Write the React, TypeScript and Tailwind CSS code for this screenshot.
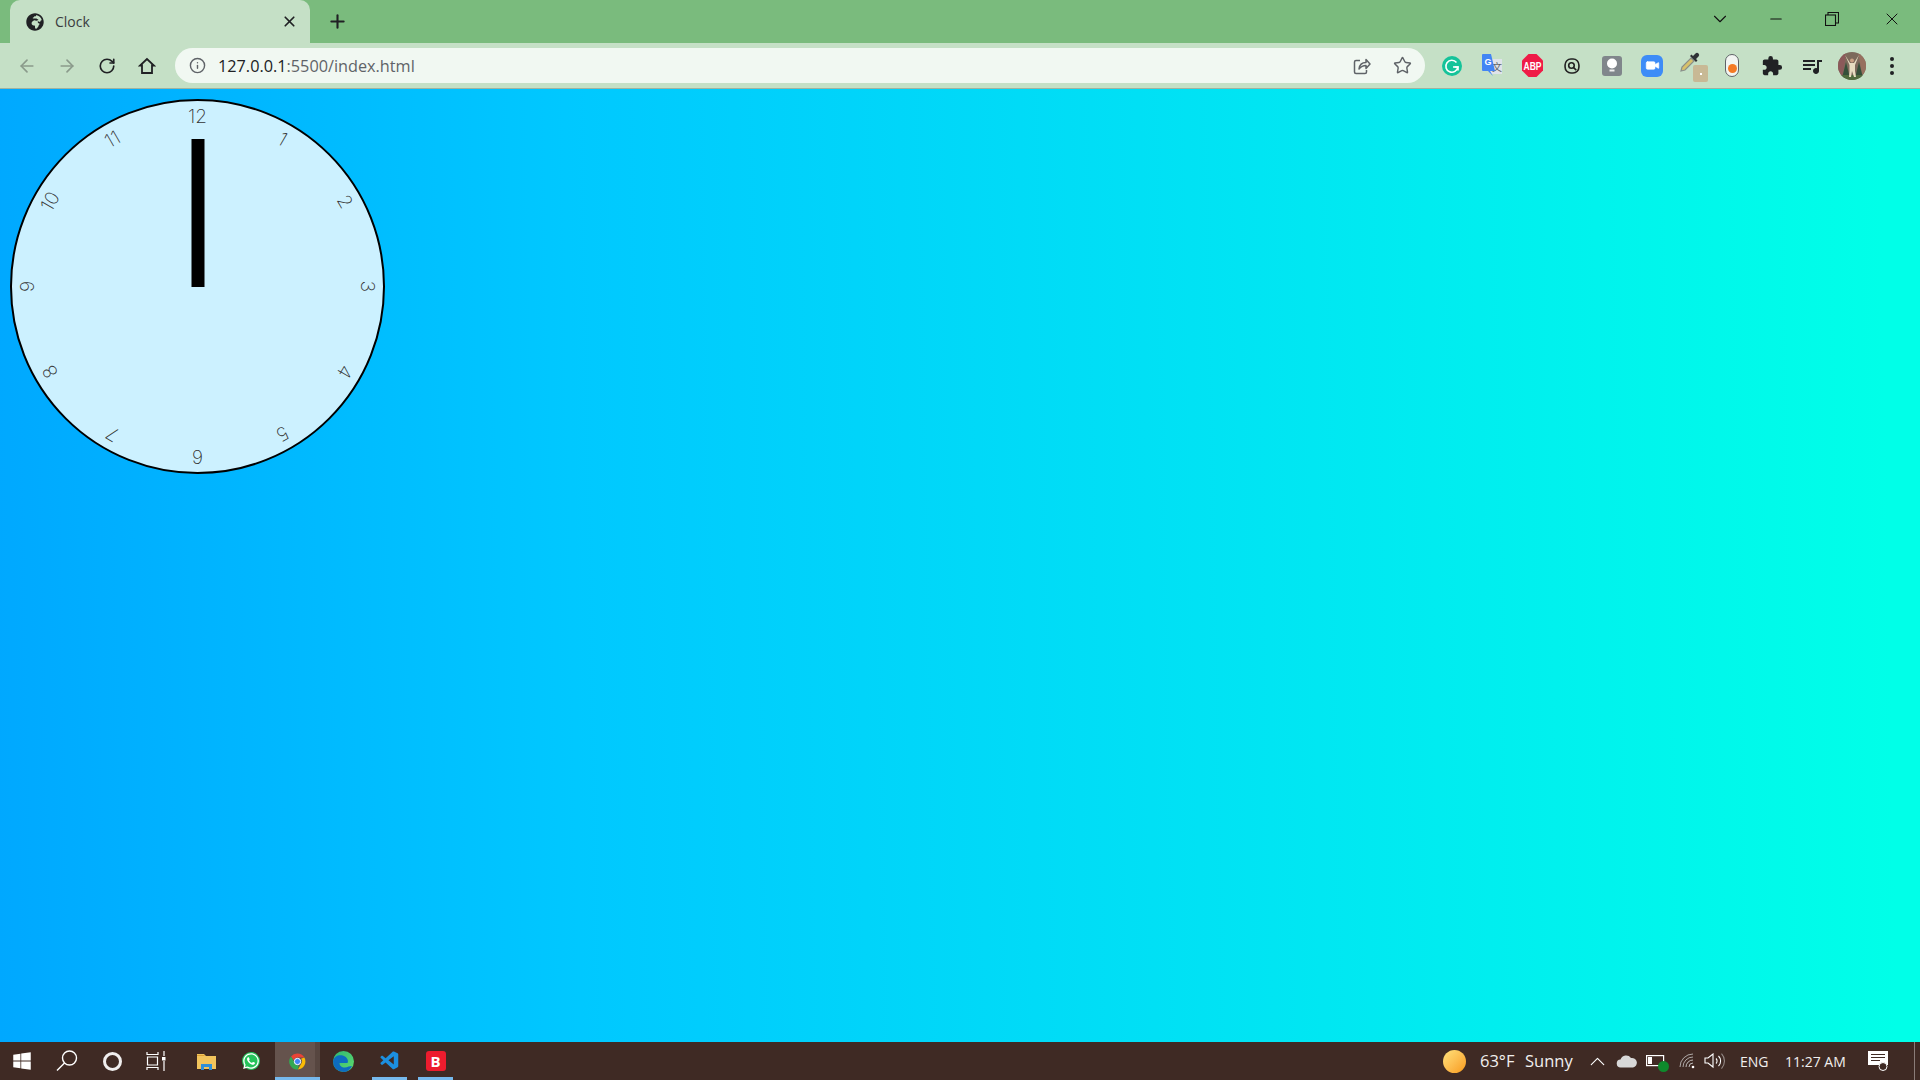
import React from 'react'
import { ArrowLeft, ArrowRight, RotateCw, Star, X, Plus, Minus, ChevronDown, ChevronUp, Info, Video } from 'lucide-react'
import { FaGlobeAfrica, FaWindows, FaWhatsapp } from 'react-icons/fa'
import { MdExtension, MdQueueMusic } from 'react-icons/md'
import { VscVscode } from 'react-icons/vsc'

const NUMBERS = [
  { n: 12, cls: 'rotate-0' },
  { n: 1, cls: 'rotate-[30deg]' },
  { n: 2, cls: 'rotate-[60deg]' },
  { n: 3, cls: 'rotate-[90deg]' },
  { n: 4, cls: 'rotate-[120deg]' },
  { n: 5, cls: 'rotate-[150deg]' },
  { n: 6, cls: 'rotate-[180deg]' },
  { n: 7, cls: 'rotate-[210deg]' },
  { n: 8, cls: 'rotate-[240deg]' },
  { n: 9, cls: 'rotate-[270deg]' },
  { n: 10, cls: 'rotate-[300deg]' },
  { n: 11, cls: 'rotate-[330deg]' },
]

function ToolSlot({ children }: { children: React.ReactNode }) {
  return <div className="w-10 h-full flex items-center justify-center shrink-0">{children}</div>
}

function TabStrip() {
  return (
    <div className="h-[43px] bg-[#7abb7d] flex items-stretch shrink-0">
      <div className="ml-[10px] w-[300px] bg-[#c5e0c6] rounded-t-[10px] flex items-center pl-[16px] pr-[12px]">
        <FaGlobeAfrica className="text-[#202124] text-[18px] shrink-0" />
        <span className="ml-[11px] text-[14px] text-[#3a3c40] flex-1">Clock</span>
        <X size={17} strokeWidth={2.4} className="text-[#202124]" />
      </div>
      <div className="w-[55px] flex items-center justify-center">
        <Plus size={21} strokeWidth={2.4} className="text-[#202124]" />
      </div>
      <div className="flex-1" />
      <div className="flex items-center h-[38px] text-[#111]">
        <ChevronDown size={22} strokeWidth={1.2} className="mr-[36px]" />
        <Minus size={18} strokeWidth={1.4} className="mr-[40px]" />
        <svg width="14" height="14" viewBox="0 0 14 14" fill="none" stroke="currentColor" strokeWidth="1.100" className="mr-[43px]">
          <rect x="0.5" y="3" width="10" height="10.5" />
          <path d="M3 3V.5h10.5V11H10.500" />
        </svg>
        <X size={20} strokeWidth={1.2} className="mr-[18px]" />
      </div>
    </div>
  )
}

function HomeIcon() {
  return (
    <svg width="18" height="18" viewBox="0 0 18 18" fill="none" stroke="#202124" strokeWidth="1.800" strokeLinejoin="miter">
      <path d="M9 2 2 8.500h2V16h10V8.500h2z" />
    </svg>
  )
}

function ShareIcon() {
  return (
    <svg width="18" height="18" viewBox="0 0 18 18" fill="none" stroke="#5f6368" strokeWidth="1.500">
      <path d="M7 3.500H3a1.500 1.500 0 0 0-1.500 1.500v10A1.500 1.500 0 0 0 3 16.500h9a1.500 1.500 0 0 0 1.500-1.500v-2" />
      <path d="M6 12c.5-4 3-6.500 7-6.500V2.500l4 4.500-4 4.500V8.500c-3 0-5 1-7 3.500z" strokeLinejoin="round" />
    </svg>
  )
}

function Grammarly() {
  return (
    <svg width="20" height="20" viewBox="0 0 20 20">
      <circle cx="10" cy="10" r="10" fill="#15c39a" />
      <path d="M14.500 6.500A6 6 0 1 0 15.800 11H11" fill="none" stroke="#fff" strokeWidth="1.600" />
      <path d="M12.500 11h3.500v3.500" fill="none" stroke="#fff" strokeWidth="1.600" />
    </svg>
  )
}

function TranslateIcon() {
  return (
    <svg width="20" height="24" viewBox="0 0 20 24">
      <rect x="8" y="5" width="12" height="15" fill="#dfe3ea" />
      <text x="10" y="17" fontSize="10" fill="#5f6368" fontFamily="Noto Sans CJK SC, sans-serif">文</text>
      <path d="M0 1a1 1 0 0 1 1-1h8l4 17H8l3 5-5-5H1a1 1 0 0 1-1-1z" fill="#4285f4" />
      <text x="2.500" y="11" fontSize="9" fontWeight="700" fill="#fff" fontFamily="Liberation Sans, sans-serif">G</text>
    </svg>
  )
}

function AbpIcon() {
  return (
    <svg width="21" height="23" viewBox="0 0 21 23">
      <path d="M6.500 0h8L21 6.500v10L14.500 23h-8L0 16.500v-10z" fill="#ef1b47" />
      <text x="10.500" y="15.500" textAnchor="middle" fontSize="10.500" fontWeight="700" fill="#fff" textLength="18" lengthAdjust="spacingAndGlyphs" fontFamily="Liberation Sans, sans-serif">ABP</text>
    </svg>
  )
}

function LensIcon() {
  return (
    <svg width="16" height="16" viewBox="0 0 15 15" fill="none" stroke="#222" strokeWidth="1.500">
      <rect x="1" y="1" width="13" height="13" rx="5.500" />
      <circle cx="7" cy="7" r="2.600" />
      <path d="m9 9 2.500 2.300" />
    </svg>
  )
}

function BulbIcon() {
  return (
    <div className="w-5 h-5 rounded-[3px] bg-[#80868b] flex items-center justify-center">
      <svg width="12" height="15" viewBox="0 0 12 15" fill="#fff">
        <circle cx="6" cy="5.500" r="5" />
        <rect x="3.500" y="11.500" width="5" height="2" fill="#eee" />
      </svg>
    </div>
  )
}

function ZoomIcon() {
  return (
    <div className="w-[22px] h-[22px] rounded-[6px] bg-[#3d8cf7] flex items-center justify-center">
      <Video size={15} fill="#fff" strokeWidth={1} className="text-white" />
    </div>
  )
}

function DropperIcon() {
  return (
    <div className="relative w-[28px] h-[30px] -mt-[1px]">
      <svg width="24" height="24" viewBox="0 0 24 24" className="absolute left-0 top-0">
        <path d="m3 21 1-4 9-9 3 3-9 9z" fill="#d8c26a" stroke="#8a8f8a" strokeWidth="1.200" />
        <path d="m12 6 6 6 1.500-1.500-1.500-1.500 2.500-2.500a2 2 0 0 0-3-3L15 6l-1.500-1.500z" fill="#2f3235" />
      </svg>
      <div className="absolute right-[-2px] bottom-[-2px] w-[15px] h-[17px] rounded-[2px] bg-[#c8b995] flex items-center justify-center">
        <span className="w-[2px] h-[2px] bg-white" />
      </div>
    </div>
  )
}

function PillIcon() {
  return (
    <div className="w-[14px] h-[23px] rounded-[7px] border-[1.5px] border-[#5f6368] bg-[#f2f5f2] flex items-end justify-center pb-[3px]">
      <span className="w-[9px] h-[9px] rounded-full bg-[#f47a25]" />
    </div>
  )
}

function Avatar() {
  return (
    <svg width="28" height="28" viewBox="0 0 28 28">
      <defs>
        <clipPath id="avatar-clip"><circle cx="14" cy="14" r="14" /></clipPath>
      </defs>
      <g clipPath="url(#avatar-clip)">
        <rect width="28" height="28" fill="#7d6a5c" />
        <path d="M0 4 8 0l-3 24H0z" fill="#8b5a5a" />
        <path d="M20 0h8v22h-4z" fill="#97705f" />
        <path d="M8 10 4 26h8zM21 10l-4 16h8z" fill="#35503a" />
        <path d="M0 23h28v5H0z" fill="#4f6b3d" />
        <path d="m7 3 5 8h4l5-8-4 10v6l1 6h-2l-2-6-1 6h-2l.5-6v-6z" fill="#e6dcc0" />
        <circle cx="14" cy="8.500" r="2" fill="#c9a184" />
      </g>
    </svg>
  )
}

function Toolbar() {
  return (
    <div className="h-[46px] bg-[#c5e0c6] border-b border-b-[#9fb3a0] flex items-center pl-[7px] shrink-0">
      <ToolSlot><ArrowLeft size={20} strokeWidth={2} className="text-[#8a9a8b]" /></ToolSlot>
      <ToolSlot><ArrowRight size={20} strokeWidth={2} className="text-[#8a9a8b]" /></ToolSlot>
      <ToolSlot><RotateCw size={18} strokeWidth={2.2} className="text-[#202124]" /></ToolSlot>
      <ToolSlot><HomeIcon /></ToolSlot>
      <div className="ml-2 w-[1250px] h-[35px] rounded-full bg-[#f1f8f2] flex items-center pl-[14px] pr-[3px] shrink-0">
        <Info size={17} strokeWidth={2} className="text-[#5f6368]" />
        <span className="ml-[12px] text-[16.25px] leading-[24px] text-[#5f6368] flex-1">
          <span className="text-[#202124]">127.0.0.1</span>:5500/index.html
        </span>
        <div className="w-[40px] flex justify-center"><ShareIcon /></div>
        <div className="w-[40px] flex justify-center"><Star size={19} strokeWidth={1.8} className="text-[#5f6368]" /></div>
      </div>
      <div className="ml-[7px] flex items-center h-full">
        <ToolSlot><Grammarly /></ToolSlot>
        <ToolSlot><TranslateIcon /></ToolSlot>
        <ToolSlot><AbpIcon /></ToolSlot>
        <ToolSlot><LensIcon /></ToolSlot>
        <ToolSlot><BulbIcon /></ToolSlot>
        <ToolSlot><ZoomIcon /></ToolSlot>
        <ToolSlot><DropperIcon /></ToolSlot>
        <ToolSlot><PillIcon /></ToolSlot>
        <ToolSlot><MdExtension className="text-[#202124] text-[22px]" /></ToolSlot>
        <ToolSlot><MdQueueMusic className="text-[#202124] text-[24px]" /></ToolSlot>
        <ToolSlot><Avatar /></ToolSlot>
        <ToolSlot>
          <div className="flex flex-col gap-[3px]">
            <span className="w-[4px] h-[4px] rounded-full bg-[#202124]" />
            <span className="w-[4px] h-[4px] rounded-full bg-[#202124]" />
            <span className="w-[4px] h-[4px] rounded-full bg-[#202124]" />
          </div>
        </ToolSlot>
      </div>
    </div>
  )
}

function Clock() {
  return (
    <div className="relative ml-[10px] mt-[10px] w-[375px] h-[375px] rounded-full border-2 border-black bg-[#ccf1ff]">
      {NUMBERS.map(({ n, cls }) => (
        <div
          key={n}
          className={`absolute inset-0 text-center pt-[4px] text-[19px] leading-[24px] font-extralight text-[#333] font-['Inter',sans-serif] ${cls}`}
        >
          {n}
        </div>
      ))}
      <div className="absolute left-1/2 -translate-x-1/2 top-[38px] w-[13px] h-[148px] bg-black" />
    </div>
  )
}

function TaskSlot({ className, children }: { className: string; children: React.ReactNode }) {
  return <div className={`relative h-full flex items-center justify-center shrink-0 ${className}`}>{children}</div>
}

function ChromeLogo() {
  return (
    <svg width="19" height="19" viewBox="0 0 48 48">
      <path d="M24 4a20 20 0 0 1 17.300 10H24a10 10 0 0 0-9.500 6.900L7.600 11.500A20 20 0 0 1 24 4z" fill="#ea4335" />
      <path d="M41.300 14A20 20 0 0 1 25 44l8.700-15A10 10 0 0 0 33 17z" fill="#fbbc05" />
      <path d="M25 44A20 20 0 0 1 7.600 11.500l8.700 15A10 10 0 0 0 27 33.500z" fill="#34a853" />
      <circle cx="24" cy="24" r="8" fill="#4285f4" stroke="#fff" strokeWidth="2.500" />
    </svg>
  )
}

function EdgeLogo() {
  return (
    <svg width="21" height="21" viewBox="0 0 21 21">
      <defs>
        <linearGradient id="edge-top" x1="0" y1="0" x2="1" y2="1">
          <stop offset="0" stopColor="#2fb673" />
          <stop offset="1" stopColor="#5fdc6e" />
        </linearGradient>
      </defs>
      <circle cx="10.500" cy="10.500" r="10.500" fill="url(#edge-top)" />
      <path d="M0 10.500C1 4 8 3 12 5.500c3 2 3.500 5 2.500 6.500H6.500c0 4 5 6 9 3.500l3.500-.5c-2 4-5 6-8.500 6A10.500 10.500 0 0 1 0 10.500z" fill="#0d6cc0" />
    </svg>
  )
}

function Taskbar() {
  return (
    <div className="h-[38px] bg-[#3f2a24] flex items-stretch shrink-0 text-[#f1efee] font-['Open_Sans',sans-serif]">
      <TaskSlot className="w-[44px]"><FaWindows className="text-white text-[20px]" /></TaskSlot>
      <TaskSlot className="w-[46px]">
        <svg width="22" height="22" viewBox="0 0 22 22" fill="none" stroke="#fff" strokeWidth="1.400">
          <circle cx="13.500" cy="8" r="7" />
          <path d="M8.500 13 1 20.500" />
        </svg>
      </TaskSlot>
      <TaskSlot className="w-[44px]"><span className="w-[19px] h-[19px] rounded-full border-[3px] border-[#f0eeee]" /></TaskSlot>
      <TaskSlot className="w-[44px]">
        <svg width="20" height="20" viewBox="0 0 20 20" fill="none" stroke="#fff" strokeWidth="1.200">
          <path d="M1 1v2.500h11V1M1 19v-2.500h11V19M1.500 6h10v8h-10z" />
          <path d="M18 0v5M18 10v10" />
          <rect x="16" y="6" width="3.500" height="3.500" fill="#fff" stroke="none" />
        </svg>
      </TaskSlot>
      <TaskSlot className="w-[49px] pl-[7px]">
        <svg width="19" height="17" viewBox="0 0 19 17">
          <path d="M0 1h7l2 2h10v13H0z" fill="#f2c45c" />
          <path d="M0 3h7l1-1H0z" fill="#dca135" />
          <path d="M4 11h11v6h-3v-3H7v3H4z" fill="#2f8fd8" />
        </svg>
      </TaskSlot>
      <TaskSlot className="w-[48px]">
        <div className="w-[18px] h-[18px] rounded-full bg-[#25c35a] flex items-center justify-center">
          <FaWhatsapp className="text-white text-[18px]" />
        </div>
      </TaskSlot>
      <TaskSlot className="w-[45px]">
        <div className="absolute inset-y-0 left-0 w-[40px] bg-[#65534d]" />
        <div className="absolute inset-y-0 right-0 w-[5px] bg-[#574640]" />
        <div className="relative"><ChromeLogo /></div>
        <div className="absolute left-0 right-0 bottom-0 h-[3px] bg-[#76b9ed]" />
      </TaskSlot>
      <TaskSlot className="w-[46px]"><EdgeLogo /></TaskSlot>
      <TaskSlot className="w-[47px]">
        <VscVscode className="text-[#1c8fe0] text-[22px]" />
        <div className="absolute left-[6px] right-[6px] bottom-0 h-[3px] bg-[#76b9ed]" />
      </TaskSlot>
      <TaskSlot className="w-[45px]">
        <div className="w-[20px] h-[20px] rounded-[3px] bg-[#ed1c2e] flex items-center justify-center text-white text-[15px] font-bold leading-none">B</div>
        <div className="absolute left-[5px] right-[5px] bottom-0 h-[3px] bg-[#76b9ed]" />
      </TaskSlot>

      <div className="flex-1" />

      <div className="flex items-center w-[24px] h-full shrink-0">
        <span className="w-[23px] h-[23px] rounded-full bg-gradient-to-br from-[#ffe27a] to-[#f79a0e]" />
      </div>
      <div className="ml-[13px] w-[37px] flex items-center text-[16.5px] whitespace-nowrap">63°F</div>
      <div className="ml-[8px] w-[49px] flex items-center text-[16.5px]">Sunny</div>
      <TaskSlot className="ml-[8px] w-[30px]"><ChevronUp size={25} strokeWidth={1.1} className="text-white" /></TaskSlot>
      <TaskSlot className="w-[28px]">
        <svg width="21" height="13" viewBox="0 0 21 13">
          <path d="M5 12.500a4 4 0 0 1-.5-8A6 6 0 0 1 15 3a4.500 4.500 0 0 1 2 9.500z" fill="#d8d8d8" />
        </svg>
      </TaskSlot>
      <TaskSlot className="w-[28px]">
        <div className="relative -ml-[4px] left-[3px]">
          <svg width="19" height="12" viewBox="0 0 19 12" fill="none" stroke="#fff" strokeWidth="1.200">
            <rect x=".6" y=".6" width="17" height="10" />
            <rect x="2" y="2" width="4" height="7" fill="#fff" stroke="none" />
          </svg>
          <span className="absolute right-[-4px] bottom-[-5px] w-[11px] h-[11px] rounded-full bg-[#0e8a2c]" />
        </div>
      </TaskSlot>
      <TaskSlot className="ml-[5px] w-[28px]">
        <svg width="16" height="16" viewBox="0 0 16 16" fill="none" stroke="#ddd" strokeWidth="1">
          <path d="M1 14A13 13 0 0 1 14 1M4 14A10 10 0 0 1 14 4" opacity=".7" />
          <path d="M7 14a7 7 0 0 1 7-7M10 14a4 4 0 0 1 4-4" opacity=".8" />
          <circle cx="14" cy="14" r="1.300" fill="#fff" stroke="none" />
        </svg>
      </TaskSlot>
      <TaskSlot className="w-[26px]">
        <svg width="21" height="16" viewBox="0 0 21 16" fill="none" stroke="#fff" strokeWidth="1.100">
          <path d="M1 5v5h3l5 4V1L4 5z" />
          <path d="M12 5.500a3.500 3.500 0 0 1 0 5M14.500 3a7 7 0 0 1 0 10" />
          <path d="M17.500 .5a11 11 0 0 1 0 15" opacity=".45" />
        </svg>
      </TaskSlot>
      <div className="ml-[13px] w-[29px] flex items-center text-[14px]">ENG</div>
      <div className="ml-[16px] w-[62px] flex items-center text-[14px] whitespace-nowrap">11:27 AM</div>
      <TaskSlot className="ml-[16px] w-[30px]">
        <svg width="20" height="20" viewBox="0 0 20 20">
          <path d="M0 0h20v14h-4l-2 3-3-3H0z" fill="#fff" />
          <path d="M3 3.500h14M3 6.500h14M3 9.500h9" stroke="#3f2a24" strokeWidth="1" />
          <circle cx="15" cy="15.500" r="4" fill="#3f2a24" stroke="#fff" strokeWidth="1" />
        </svg>
      </TaskSlot>
      <div className="ml-[21px] mr-[5px] w-px bg-[#8a7c78]" />
    </div>
  )
}

export default function App() {
  return (
    <div className="w-screen h-screen overflow-hidden flex flex-col font-['Open_Sans',sans-serif]">
      <TabStrip />
      <Toolbar />
      <main className="flex-1 bg-[linear-gradient(89deg,#00a8ff_0%,#00c8ff_30%,#00ffe8_98%)] flow-root">
        <Clock />
      </main>
      <Taskbar />
    </div>
  )
}
